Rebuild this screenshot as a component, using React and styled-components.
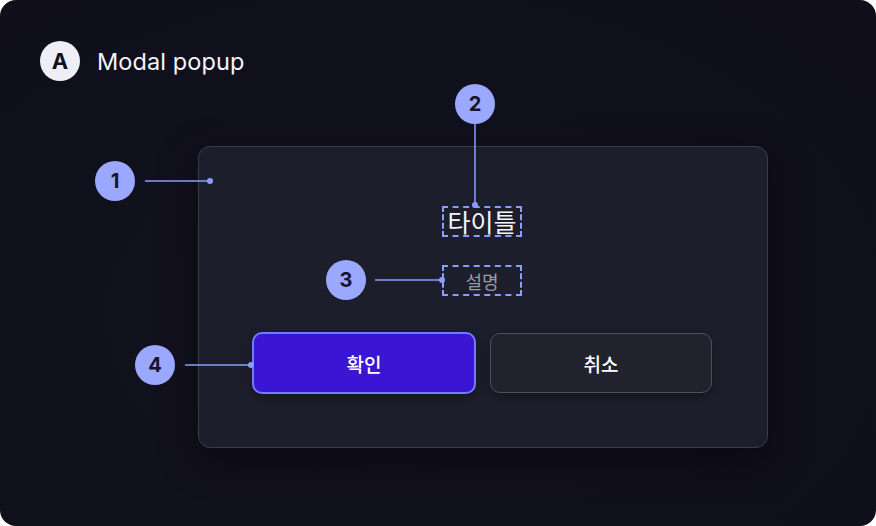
import React from 'react';
import styled, { createGlobalStyle } from 'styled-components';

const GlobalStyle = createGlobalStyle`
  html, body { margin: 0; padding: 0; background: #ffffff; }
  body { font-family: Inter, "Noto Sans CJK KR", "Noto Sans", sans-serif; }
`;

const Frame = styled.div`
  position: relative;
  width: 876px;
  height: 526px;
  box-sizing: border-box;
  border-radius: 16px;
  background: radial-gradient(ellipse at 45% 60%, #14131f 0%, #100f1c 60%, #0f0e1a 100%);
  padding: 41px 0 0 40px;
  display: flex;
  flex-direction: column;
  overflow: hidden;
`;

const Header = styled.div`
  display: flex;
  align-items: center;
  gap: 17px;
  height: 40px;
`;

const Letter = styled.div`
  width: 40px;
  height: 40px;
  border-radius: 50%;
  background: #eeeef8;
  color: #12111e;
  font-size: 22px;
  font-weight: 700;
  display: flex;
  align-items: center;
  justify-content: center;
`;

const HeaderTitle = styled.div`
  color: #f4f4fa;
  font-size: 23.5px;
  font-weight: 400;
  letter-spacing: 0.1px;
`;

const Modal = styled.div`
  position: relative;
  margin: 65px 0 0 158px;
  width: 570px;
  height: 302px;
  box-sizing: border-box;
  background: #1d1e2b;
  border: 1px solid #3b3c4a;
  border-radius: 12px;
  box-shadow: 0 12px 40px rgba(0, 0, 0, 0.45);
  padding: 59px 55px 0 53px;
  display: flex;
  flex-direction: column;
  align-items: center;
`;

const Marked = styled.div`
  position: relative;
  min-width: 80px;
  box-sizing: border-box;
  border: 2px dashed #8d9cff;
  display: flex;
  align-items: center;
  justify-content: center;
  height: ${({ h }) => h}px;
  margin-top: ${({ gap }) => gap || 0}px;
`;

const Title = styled.span`
  color: #f5f5fb;
  font-size: 25px;
  font-weight: 400;
  font-family: "Noto Sans CJK KR", sans-serif;
  line-height: 1;
`;

const Desc = styled.span`
  color: #9b9ba8;
  font-size: 18px;
  font-family: "Noto Sans CJK KR", sans-serif;
  line-height: 1;
`;

const Actions = styled.div`
  margin-top: 36px;
  display: grid;
  grid-template-columns: 224px 222px;
  gap: 14px;
  align-items: center;
`;

const Button = styled.button`
  position: relative;
  box-sizing: border-box;
  height: ${({ primary }) => (primary ? 62 : 60)}px;
  border-radius: 10px;
  border: ${({ primary }) => (primary ? '2px solid #707cff' : '1px solid #50515e')};
  background: ${({ primary }) => (primary ? '#3a16d4' : '#21222d')};
  color: #ffffff;
  font-size: 19px;
  font-weight: 500;
  font-family: "Noto Sans CJK KR", sans-serif;
  box-shadow: 0 4px 10px rgba(0, 0, 0, 0.3);
`;

const Pin = styled.div`
  position: absolute;
  left: ${({ x }) => x - 20}px;
  top: ${({ y }) => y - 20}px;
  width: 40px;
  height: 40px;
  border-radius: 50%;
  background: #9aa8ff;
  color: #15142a;
  font-size: 20px;
  font-weight: 700;
  font-family: Inter, sans-serif;
  display: flex;
  align-items: center;
  justify-content: center;
  z-index: 3;
`;

const Leader = styled.svg`
  position: absolute;
  left: 0;
  top: 0;
  width: 876px;
  height: 526px;
  pointer-events: none;
  z-index: 2;
`;

const pins = [
  { n: 1, x: 115, y: 181, line: [145, 181, 210, 181] },
  { n: 2, x: 475, y: 104, line: [475, 124, 475, 205] },
  { n: 3, x: 346, y: 280, line: [375, 280, 442, 280] },
  { n: 4, x: 155, y: 365, line: [185, 365, 251, 365] },
];

export default function App() {
  return (
    <>
      <GlobalStyle />
      <Frame>
        <Header>
          <Letter>A</Letter>
          <HeaderTitle>Modal popup</HeaderTitle>
        </Header>
        <Modal>
          <Marked h={31}>
            <Title>타이틀</Title>
          </Marked>
          <Marked h={31} gap={28}>
            <Desc>설명</Desc>
          </Marked>
          <Actions>
            <Button primary>확인</Button>
            <Button>취소</Button>
          </Actions>
        </Modal>
        <Leader viewBox="0 0 876 526">
          {pins.map(p => (
            <g key={p.n}>
              <line x1={p.line[0]} y1={p.line[1]} x2={p.line[2]} y2={p.line[3]} stroke="#8d9cff" strokeWidth="1.5" />
              <circle cx={p.line[2]} cy={p.line[3]} r="3" fill="#8d9cff" />
            </g>
          ))}
        </Leader>
        {pins.map(p => (
          <Pin key={p.n} x={p.x} y={p.y}>{p.n}</Pin>
        ))}
      </Frame>
    </>
  );
}
